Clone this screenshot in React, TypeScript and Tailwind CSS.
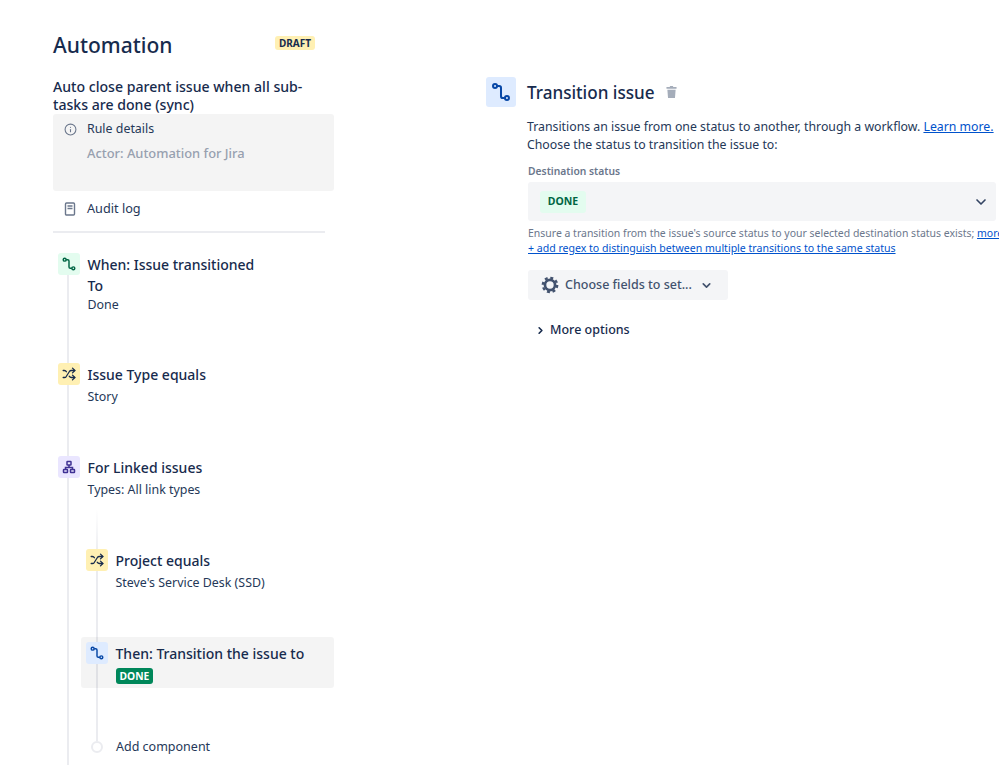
import { ChevronDown, ChevronRight, Info, Shuffle } from 'lucide-react';
import type { ReactNode } from 'react';

function TransitionGlyph({ className }: { className: string }) {
  return (
    <svg viewBox="0 0 24 24" fill="none" stroke="currentColor" strokeWidth="2.2" className={className}>
      <circle cx="5.5" cy="5.5" r="2.2" />
      <path d="M7.7 5.5h2.3a2 2 0 0 1 2 2v9a2 2 0 0 0 2 2h2.3" />
      <circle cx="18.5" cy="18.5" r="2.2" />
    </svg>
  );
}

function TrashGlyph() {
  return (
    <svg viewBox="0 0 12 13" className="h-[12px] w-[11px] fill-[#a5adba]">
      <path d="M4.5 0h3l.5 1h3.5v2H.5V1H4zM1.5 4h9l-.7 9H2.2z" />
    </svg>
  );
}

function LogGlyph() {
  return (
    <svg viewBox="0 0 12 14" fill="none" stroke="#6b778c" strokeWidth="1.4" className="h-[14px] w-3">
      <rect x="1.5" y="1" width="9" height="12" rx="1" />
      <path d="M3.5 4h5M3.5 6.5h5" />
    </svg>
  );
}

function TreeGlyph() {
  return (
    <svg viewBox="0 0 14 14" fill="none" stroke="#403294" strokeWidth="1.5" className="h-[14px] w-[14px]">
      <rect x="5" y="1.5" width="4" height="3.5" rx=".5" />
      <rect x="1.5" y="9.5" width="4" height="3" rx=".5" />
      <rect x="8.5" y="9.5" width="4" height="3" rx=".5" />
      <path d="M7 5v2.5M3.5 9.5v-2h7v2" />
    </svg>
  );
}

function GearGlyph() {
  return (
    <svg viewBox="0 0 20 20" fill="none" stroke="#42526e" className="h-[18px] w-[18px]">
      <circle cx="10" cy="10" r="5.6" strokeWidth="3" />
      <circle cx="10" cy="10" r="8" strokeWidth="2.6" strokeDasharray="3.3 3" />
    </svg>
  );
}

function Step({ icon, bg, title, children, className = '' }: { icon: ReactNode; bg: string; title: string; children?: ReactNode; className?: string }) {
  return (
    <div className={`relative flex items-start ${className}`}>
      <div className={`flex h-[22px] w-[22px] shrink-0 items-center justify-center rounded-[3px] ${bg}`}>{icon}</div>
      <div className="ml-[7.5px] min-w-0">
        <div className="mt-[2px] text-[14px] leading-[20px] font-medium text-[#172b4d]">{title}</div>
        {children}
      </div>
    </div>
  );
}

function Sub({ children }: { children: ReactNode }) {
  return <div className="mt-[2px] text-[12.4px] leading-[20px] text-[#253858]">{children}</div>;
}

export default function App() {
  return (
    <div className="flex h-[765px] w-[999px] overflow-hidden bg-white font-['Noto_Sans',sans-serif] text-[#172b4d]">
      {/* Rule sidebar */}
      <aside className="relative ml-[53px] w-[281px] shrink-0 pt-[28px]">
        <div className="flex h-[32px] w-[262px] items-center justify-between">
          <h1 className="mt-[2px] text-[21px] leading-[32px] font-medium text-[#172b4d]">Automation</h1>
          <span className="mb-[2px] rounded-[3px] bg-[#fff0b3] px-[4px] text-[10px] leading-[14px] font-bold text-[#172b4d]">DRAFT</span>
        </div>
        <p className="mt-[18px] w-[260px] text-[14.1px] leading-[18px] font-medium text-[#172b4d]">Auto close parent issue when all sub-tasks are done (sync)</p>
        <div className="h-[77px] rounded-[3px] bg-[#f4f4f4] pt-[5px]">
          <div className="flex items-center text-[12.4px] leading-[20px] text-[#253858]">
            <span className="flex w-[34px] justify-center"><Info className="h-[13px] w-[13px] text-[#6b778c]" /></span>
            <span>Rule details</span>
          </div>
          <div className="mt-[4px] pl-[34px] text-[12.9px] leading-[20px] font-medium text-[#97a0af]">Actor: Automation for Jira</div>
        </div>
        <div className="mt-[8px] flex h-[20px] items-center text-[12.7px] text-[#253858]">
          <span className="flex w-[34px] justify-center"><LogGlyph /></span>
          <span>Audit log</span>
        </div>
        <div className="mt-[12px] h-[2px] w-[272px] bg-[#ebecf0]" />

        <div className="relative mt-[20px] pl-[5px]">
          {/* trunk line */}
          <div className="absolute top-[20px] left-[14px] h-[500px] w-[2px] bg-[#ebecf0]" />
          <Step icon={<TransitionGlyph className="h-4 w-4 text-[#006644]" />} bg="bg-[#e3fcef]" title="When: Issue transitioned">
            <div className="mt-[1px] text-[14px] leading-[20px] font-medium text-[#172b4d]">To</div>
            <div className="text-[12.4px] leading-[18px] text-[#253858]">Done</div>
          </Step>
          <Step className="mt-[49px]" icon={<Shuffle className="h-[14px] w-[14px] text-[#172b4d]" strokeWidth={2.2} />} bg="bg-[#fff0b3]" title="Issue Type equals">
            <Sub>Story</Sub>
          </Step>
          <Step className="mt-[49px]" icon={<TreeGlyph />} bg="bg-[#eae6ff]" title="For Linked issues">
            <Sub>Types: All link types</Sub>
          </Step>

          <div className="relative mt-[49px] ml-[-5px] pl-[33px]">
            {/* branch line */}
            <div className="absolute top-[-40px] left-[43px] h-[232px] w-[2px] bg-gradient-to-b from-white to-[#ebecf0] to-[20%]" />
            <Step icon={<Shuffle className="h-[14px] w-[14px] text-[#172b4d]" strokeWidth={2.2} />} bg="bg-[#fff0b3]" title="Project equals">
              <Sub>Steve's Service Desk (SSD)</Sub>
            </Step>
            <div className="relative mt-[44px] -ml-[5px] h-[51px] rounded-[3px] bg-black/[0.045] pt-[5px] pl-[5px]">
              <Step icon={<TransitionGlyph className="h-4 w-4 text-[#0747a6]" />} bg="bg-[#deebff]" title="Then: Transition the issue to">
                <span className="mt-[4px] block w-fit rounded-[3px] bg-[#00875a] px-[4px] text-[10.3px] leading-[16px] font-bold text-white">DONE</span>
              </Step>
            </div>
            <div className="relative mt-[49px] flex items-center text-[12.5px] leading-[20px] text-[#253858]">
              <span className="ml-[5px] h-[12px] w-[12px] rounded-full border-2 border-[#ebecf0] bg-white" />
              <span className="ml-[13px]">Add component</span>
            </div>
          </div>
        </div>
      </aside>

      {/* Component config */}
      <main className="ml-[152px] min-w-0 flex-1 pt-[77px]">
        <div className="flex h-[30px] items-center">
          <div className="flex h-[30px] w-[30px] items-center justify-center rounded-[3px] bg-[#deebff]">
            <TransitionGlyph className="h-[22px] w-[22px] text-[#0747a6]" />
          </div>
          <h2 className="mt-[2px] ml-[11px] text-[17.1px] leading-[30px] font-medium text-[#172b4d]">Transition issue</h2>
          <span className="ml-[11px] flex"><TrashGlyph /></span>
        </div>
        <div className="mt-[11px] pl-[41px]">
          <p className="text-[12.3px] leading-[18px] whitespace-nowrap text-[#253858]">
            Transitions an issue from one status to another, through a workflow. <a className="text-[#0052cc] underline">Learn more.</a>
          </p>
          <p className="text-[12.3px] leading-[18px] whitespace-nowrap text-[#253858]">Choose the status to transition the issue to:</p>
          <div className="mt-[9px] pl-[1px] text-[10.3px] leading-[16px] font-semibold text-[#6b778c]">Destination status</div>
          <div className="mt-[3px] ml-[1px] flex h-[39px] w-[468px] items-center justify-between rounded-[3px] bg-[#f4f5f7] pr-[7px] pl-[12px]">
            <span className="flex h-[22px] w-[46px] items-center justify-center rounded-[3px] bg-[#e3fcef] text-[10.5px] font-bold text-[#006644]">DONE</span>
            <ChevronDown className="h-[16px] w-[16px] text-[#344563]" strokeWidth={2.5} />
          </div>
          <p className="mt-[5px] ml-[1px] text-[10.47px] leading-[15px] whitespace-nowrap text-[#6b778c]">
            Ensure a transition from the issue's source status to your selected destination status exists; <a className="text-[#0052cc] underline">more</a>
          </p>
          <a className="ml-[1px] block text-[10.55px] leading-[15px] whitespace-nowrap text-[#0052cc] underline">+ add regex to distinguish between multiple transitions to the same status</a>
          <button className="mt-[14px] ml-[1px] flex h-[30px] w-[200px] items-center rounded-[3px] bg-[#f4f5f7] pl-[13px] text-[12.5px] font-medium text-[#42526e]">
            <GearGlyph />
            <span className="ml-[6px]">Choose fields to set...</span>
            <ChevronDown className="ml-[8px] h-[13px] w-[13px]" strokeWidth={3} />
          </button>
          <div className="mt-[20px] flex items-center pl-[8px] text-[12.5px] leading-[20px] font-medium text-[#172b4d]">
            <ChevronRight className="h-[11px] w-[11px]" strokeWidth={3.5} />
            <span className="ml-[4px]">More options</span>
          </div>
        </div>
      </main>
    </div>
  );
}
